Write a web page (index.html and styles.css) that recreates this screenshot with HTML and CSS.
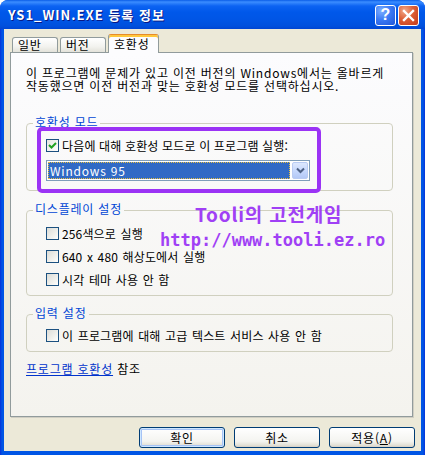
FILE: index.html
```html
<!DOCTYPE html>
<html lang="ko">
<head>
<meta charset="utf-8">
<title>YS1_WIN.EXE 등록 정보</title>
<link rel="stylesheet" href="styles.css">
</head>
<body>
<div class="window">
  <div class="titlebar">
    <span class="title">YS1_WIN.EXE 등록 정보</span>
    <div class="caption-buttons">
      <span class="cbtn help">?</span>
      <span class="cbtn close"><svg width="13" height="13" viewBox="0 0 13 13"><path d="M2 2 L11 11 M11 2 L2 11" stroke="#fff" stroke-width="2.4" stroke-linecap="square"/></svg></span>
    </div>
  </div>
  <div class="client">
    <div class="tabs">
      <div class="tab">일반</div>
      <div class="tab">버전</div>
      <div class="tab active">호환성</div>
    </div>
    <div class="panel">
      <p class="intro"><span class="line">이 프로그램에 문제가 있고 이전 버전의 Windows에서는 올바르게</span><span class="line">작동했으면 이전 버전과 맞는 호환성 모드를 선택하십시오.</span></p>

      <fieldset class="group g1">
        <legend>호환성 모드</legend>
        <div class="check"><span class="box checked"><svg width="11" height="11" viewBox="0 0 11 11"><path d="M2 5 L4.5 7.5 L9 3" fill="none" stroke="#21A121" stroke-width="2"/></svg></span><span class="label">다음에 대해 호환성 모드로 이 프로그램 실행:</span></div>
        <div class="combo">
          <div class="value"><span>Windows 95</span></div>
          <div class="arrow"><svg width="9" height="7" viewBox="0 0 9 7"><path d="M1 1.5 L4.5 5 L8 1.5" fill="none" stroke="#4D6185" stroke-width="2"/></svg></div>
        </div>
      </fieldset>

      <fieldset class="group g2">
        <legend>디스플레이 설정</legend>
        <div class="rows">
          <div class="check"><span class="box"></span><span class="label">256색으로 실행</span></div>
          <div class="check"><span class="box"></span><span class="label">640 x 480 해상도에서 실행</span></div>
          <div class="check"><span class="box"></span><span class="label">시각 테마 사용 안 함</span></div>
        </div>
      </fieldset>

      <fieldset class="group g3">
        <legend>입력 설정</legend>
        <div class="check"><span class="box"></span><span class="label">이 프로그램에 대해 고급 텍스트 서비스 사용 안 함</span></div>
      </fieldset>

      <p class="see"><a href="#" class="link">프로그램 호환성</a> 참조</p>

      <div class="highlight"></div>
      <div class="watermark">
        <div class="wm1">Tooli의 고전게임</div>
        <div class="wm2">http://www.tooli.ez.ro</div>
      </div>
    </div>
    <div class="buttons">
      <button class="btn default">확인</button>
      <button class="btn">취소</button>
      <button class="btn">적용(<u>A</u>)</button>
    </div>
  </div>
</div>
</body>
</html>
```

FILE: styles.css
```css
* { box-sizing: border-box; }
html, body { margin: 0; padding: 0; }
body {
  width: 425px;
  height: 455px;
  overflow: hidden;
  background: #ffffff;
  font-family: "Noto Sans CJK KR", "Noto Sans", sans-serif;
  font-size: 12px;
  line-height: 13px;
  letter-spacing: 0.8px;
  color: #000;
}
.window {
  width: 425px;
  height: 455px;
  display: flex;
  flex-direction: column;
  background: linear-gradient(to right, #0831D9 0, #0055E5 2px, #0055E5 calc(100% - 2px), #0831D9 100%);
  border-radius: 8px 8px 0 0;
  overflow: hidden;
}
.titlebar {
  height: 29px;
  flex: none;
  display: flex;
  align-items: center;
  justify-content: space-between;
  padding: 0 6px 0 8px;
  background: linear-gradient(to bottom, #0A5DE8 0, #3B8DFF 2px, #0C63F2 6px, #0058EA 12px, #0055E5 20px, #0050DD 26px, #0045D2 29px);
}
.title {
  color: #fff;
  font-weight: bold;
  font-size: 13px;
  letter-spacing: 1px;
  text-shadow: 1px 1px 0 #0A1883;
}
.caption-buttons { display: flex; gap: 2px; margin-top: 1px; }
.cbtn {
  width: 21px;
  height: 21px;
  border: 1px solid #fff;
  border-radius: 3px;
  display: flex;
  align-items: center;
  justify-content: center;
  letter-spacing: 0;
}
.help {
  background: radial-gradient(circle at 30% 25%, #7FB0FF 0, #3C7BF5 45%, #1E55D8 100%);
  color: #fff;
  font: bold 16px/1 "Liberation Sans", sans-serif;
}
.close {
  background: radial-gradient(circle at 30% 25%, #F3A98A 0, #DC5F36 45%, #C1391A 100%);
}
.client {
  flex: 1;
  margin: 0 4px 4px;
  background: #ECE9D8;
  padding: 5px 6px 3px 6px;
  display: flex;
  flex-direction: column;
}
.tabs {
  display: flex;
  align-items: flex-end;
  height: 18px;
  padding-left: 2px;
  flex: none;
}
.tab {
  height: 15px;
  width: 46px;
  padding-left: 5px;
  margin-right: 2px;
  border: 1px solid #919B9C;
  border-bottom: none;
  border-radius: 3px 3px 0 0;
  background: linear-gradient(#FFFFFF, #F3F3EF 60%, #E3E2DA);
  line-height: 13px;
}
.tab.active {
  height: 19px;
  width: 51px;
  margin-right: 0;
  margin-bottom: -1px;
  padding-top: 2px;
  border-top: 1px solid #E68B2C;
  box-shadow: inset 0 2px 0 #FFC83C;
  background: #FCFCFE;
  position: relative;
  z-index: 1;
}
.panel {
  flex: 1;
  margin-right: 2px;
  border: 1px solid #919B9C;
  background: linear-gradient(#FCFCFE, #F4F3EE);
  box-shadow: 1px 1px 0 #D0CEC3;
  padding: 13px 19px 0 15px;
  position: relative;
}
.intro { margin: 0; }
.intro .line { display: block; height: 12.5px; white-space: nowrap; }
.group {
  margin: 24px 0 0;
  border: 1px solid #D0D0BF;
  border-radius: 4px;
  padding: 0 10px 9px 19px;
  min-width: 0;
}
.group legend {
  color: #0046D5;
  padding: 0 2px 4px;
  margin-left: -13px;
  line-height: 13px;
}
.g1 .check { margin-top: 7px; }
.g2 { margin-top: 11px; }
.g2 .rows { padding-top: 8px; display: flex; flex-direction: column; gap: 10px; }
.g3 { margin-top: 10px; }
.g3 .check { margin-top: 6px; }
.check {
  display: flex;
  align-items: center;
  height: 13px;
  gap: 3px;
  white-space: nowrap;
}
.label { letter-spacing: 0.15px; word-spacing: 1px; }
.g1 .label { letter-spacing: 0.15px; word-spacing: 0; }
.box {
  width: 13px;
  height: 13px;
  flex: none;
  border: 1px solid #1C5180;
  background: linear-gradient(135deg, #DCDCD7, #F4F4F0 70%, #FFFFFF);
  display: flex;
  align-items: center;
  justify-content: center;
}
.box.checked { background: linear-gradient(135deg, #E6E6E0, #FFFFFF); }
.combo {
  margin-top: 8px;
  width: 264px;
  height: 21px;
  border: 1px solid #7F9DB9;
  background: #fff;
  display: flex;
  padding: 1px;
  gap: 2px;
}
.combo .value {
  flex: 1;
  background: #316AC5;
  color: #fff;
  outline: 1px dotted #E8C040;
  outline-offset: -1px;
  padding-left: 2px;
  display: flex;
  align-items: center;
}
.combo .arrow {
  width: 16px;
  border: 1px solid #B9CBF3;
  border-radius: 2px;
  background: linear-gradient(#DDE8FE, #C3D5FC 60%, #B4C8F6);
  display: flex;
  align-items: center;
  justify-content: center;
}
.see { margin: 10px 0 0; }
.link { color: #0033CC; text-decoration: underline; }
.highlight {
  position: absolute;
  left: 26px;
  top: 74px;
  width: 284px;
  height: 66px;
  border: 4px solid #9B33F5;
  border-radius: 5px;
}
.watermark {
  position: absolute;
  left: 149px;
  top: 150px;
  color: #A040F5;
  display: flex;
  flex-direction: column;
  letter-spacing: 0;
}
.wm1 {
  margin-left: 35px;
  font-size: 19px;
  line-height: 22px;
  font-weight: bold;
  letter-spacing: 0.8px;
}
.wm2 {
  margin-top: 5px;
  font-family: "DejaVu Sans Mono", "Liberation Mono", monospace;
  font-size: 17px;
  line-height: 20px;
  font-weight: bold;
}
.buttons {
  display: flex;
  justify-content: flex-end;
  gap: 9px;
  margin-top: 10px;
  flex: none;
}
.btn {
  width: 86px;
  height: 21px;
  border: 1px solid #003C74;
  border-radius: 3px;
  background: linear-gradient(#FFFFFF, #F4F4F0 70%, #E3E1D7 90%, #D6D0C5);
  font: 12px/13px "Noto Sans CJK KR", sans-serif;
  letter-spacing: 0.8px;
  color: #000;
  padding: 0;
}
.btn.default {
  box-shadow: inset 0 0 0 1px #CEE7FF, inset 0 0 0 2px #A6C3F5;
}
```
